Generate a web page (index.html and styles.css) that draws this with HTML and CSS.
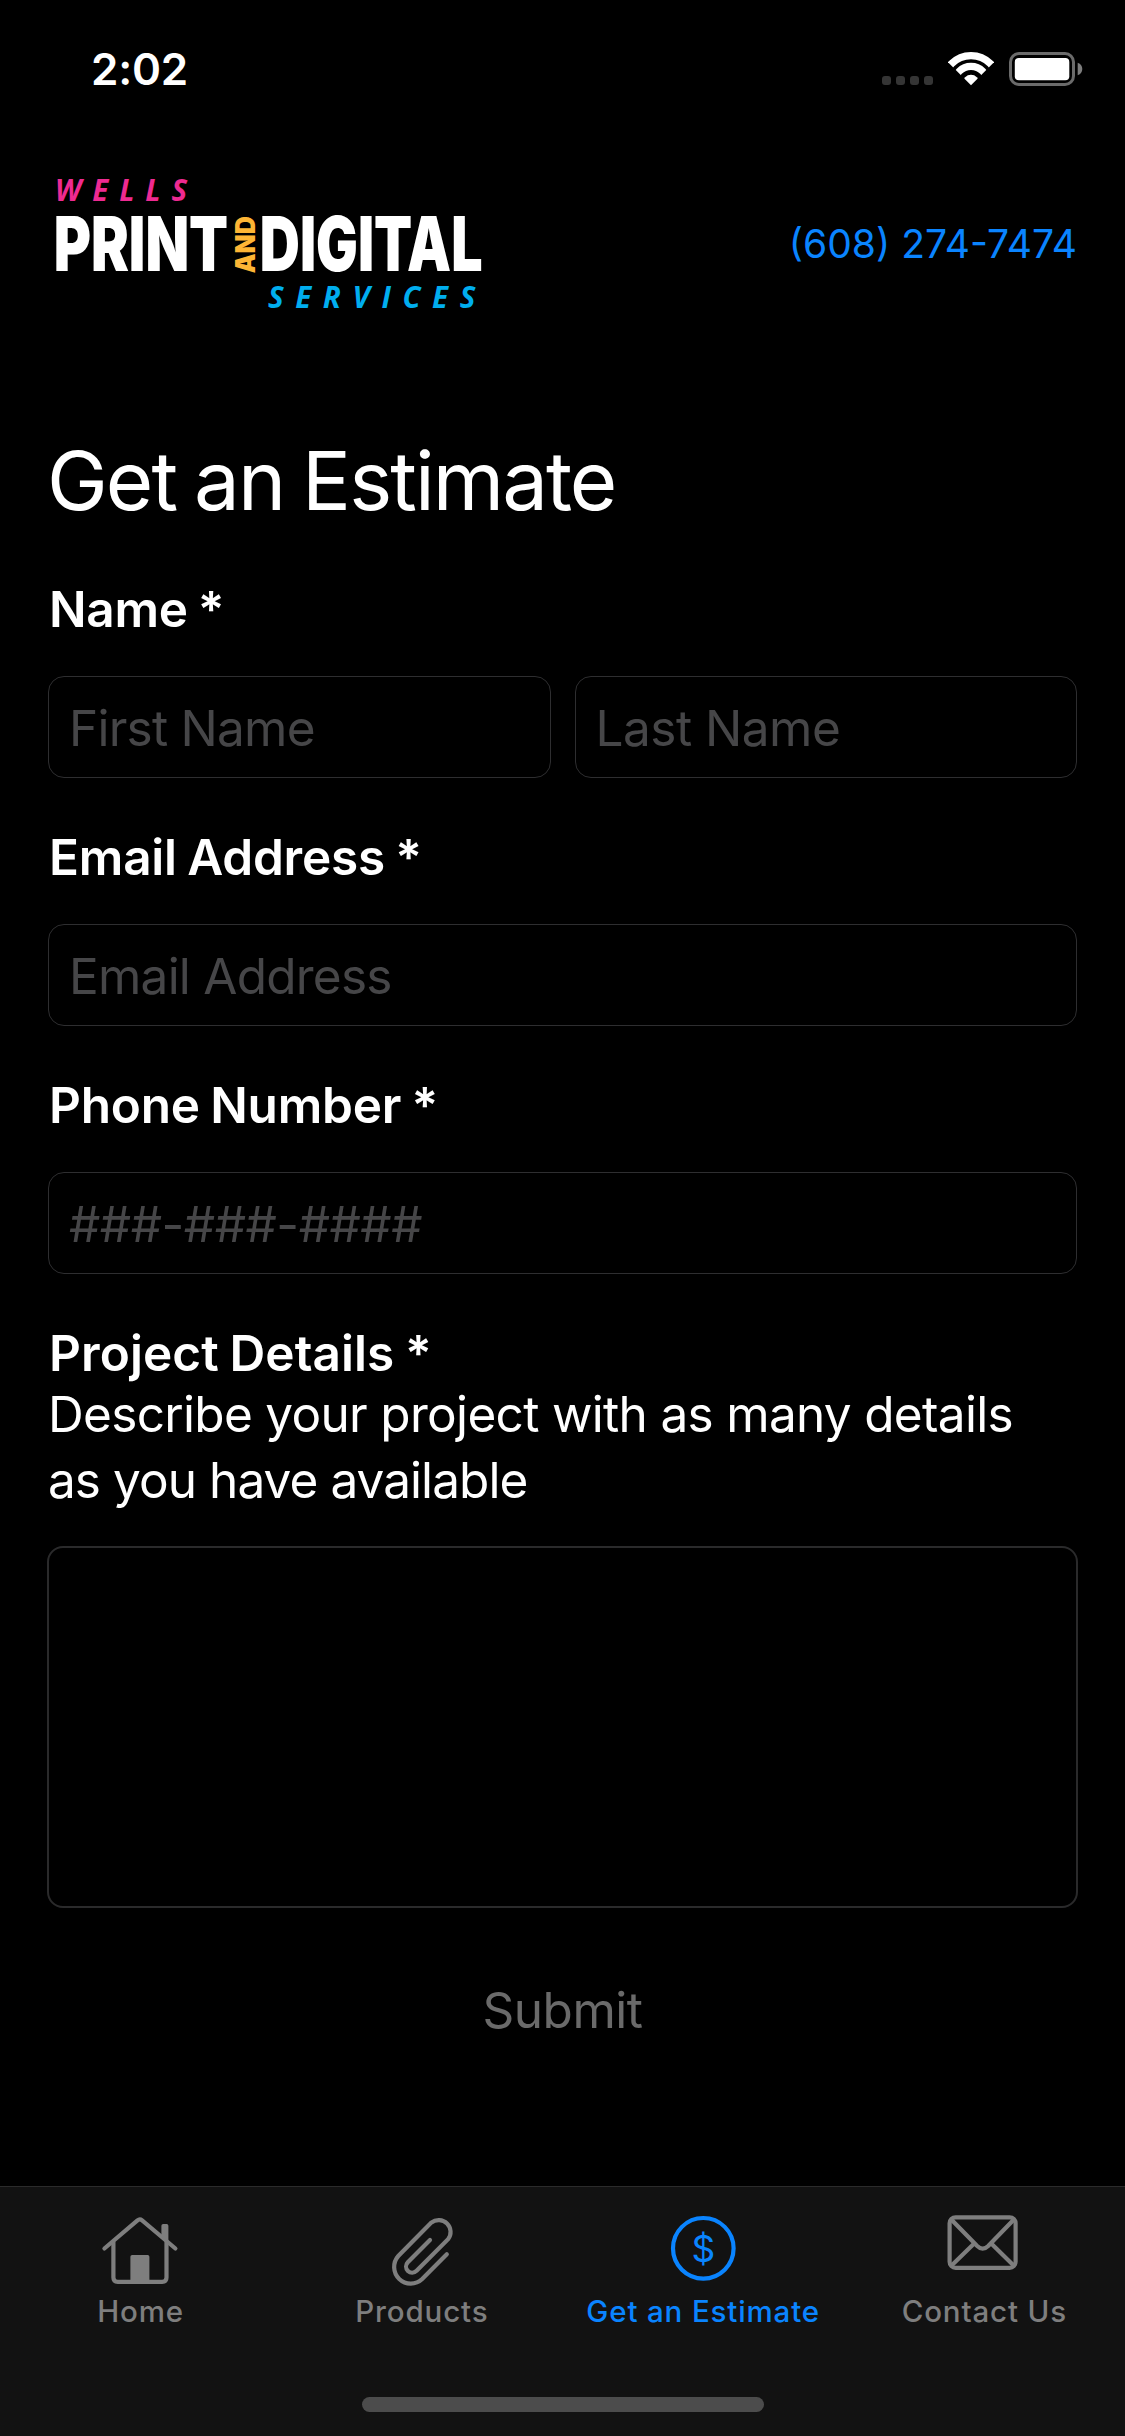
FILE: index.html
```html
<!DOCTYPE html>
<html lang="en">
<head>
<meta charset="utf-8">
<title>Get an Estimate</title>
<link rel="stylesheet" href="styles.css">
</head>
<body>
<div class="screen">
  <div class="status-bar">
    <span class="time">2:02</span>
    <div class="indicators">
      <div class="signal"><i></i><i></i><i></i><i></i></div>
      <svg class="wifi" width="46" height="34" viewBox="0 0 46 34">
        <clipPath id="wedge"><path d="M23 33.3L-11 -0.7H57Z"/></clipPath>
        <g clip-path="url(#wedge)" fill="none" stroke="#fff">
          <circle cx="23" cy="31" r="27.4" stroke-width="7.2"/>
          <circle cx="23" cy="31" r="16.6" stroke-width="7.2"/>
          <circle cx="23" cy="31" r="8.3" fill="#fff" stroke="none"/>
        </g>
      </svg>
      <svg class="battery" width="74" height="34" viewBox="0 0 74 34">
        <rect x="1.5" y="1.5" width="63" height="31" rx="8.5" fill="none" stroke="#6b6b6b" stroke-width="3"/>
        <rect x="5.8" y="6" width="54.5" height="22.3" rx="4" fill="#fff"/>
        <path d="M68.7 10.7C71.8 11.9 73.3 14.2 73.3 17S71.8 22.1 68.7 23.3Z" fill="#7d7d7d"/>
      </svg>
    </div>
  </div>

  <header class="header">
    <svg class="logo" width="426" height="136" viewBox="0 0 426 136">
      <text class="logo-wells" x="-1" y="25">WELLS</text>
      <text class="logo-main" transform="translate(-2.3 95) scale(.755 1)">PRINT</text>
      <text class="logo-and" transform="translate(199 97.3) rotate(-90) scale(.94 1)">AND</text>
      <text class="logo-main" transform="translate(203.8 95) scale(.738 1)">DIGITAL</text>
      <text class="logo-services" x="212" y="132.3">SERVICES</text>
    </svg>
    <a class="phone">(608) 274-7474</a>
  </header>

  <form class="form">
    <h1 class="title">Get an Estimate</h1>
    <div class="field">
      <label class="label label-name">Name *</label>
      <div class="inputs">
        <input class="input" type="text" placeholder="First Name">
        <input class="input input-last" type="text" placeholder="Last Name">
      </div>
    </div>
    <div class="field">
      <label class="label">Email Address *</label>
      <div class="inputs"><input class="input" type="text" placeholder="Email Address"></div>
    </div>
    <div class="field">
      <label class="label">Phone Number *</label>
      <div class="inputs"><input class="input input-phone" type="text" placeholder="###-###-####"></div>
    </div>
    <div class="field">
      <label class="label label-project">Project Details *</label>
      <p class="hint">Describe your project with as many details<br><span class="hint-end">as you have available</span></p>
      <textarea class="details"></textarea>
    </div>
    <button class="submit" type="button">Submit</button>
  </form>

  <nav class="tab-bar">
    <div class="tabs">
      <a class="tab">
        <svg class="tab-icon" viewBox="0 0 120 100">
          <path d="M23.4 55.5L56.5 27.3Q58.8 25.4 61.1 27.3L94.4 55.5" stroke-linecap="round"/>
          <path d="M32.4 48.5V84.5Q32.4 88.8 36.7 88.8H81.2Q85.5 88.8 85.5 84.5V48.5"/>
          <path class="solid" d="M49.4 90V63.8Q49.4 62 51.2 62H66.6Q68.4 62 68.4 63.8V90ZM80.4 43V32.8Q80.4 31 82.2 31H85.6Q87.4 31 87.4 32.8V49Z"/>
        </svg>
        <span>Home</span>
      </a>
      <a class="tab">
        <svg class="tab-icon" viewBox="0 0 120 100">
          <path d="M84.8 61.3L60.2 86A16.6 16.6 0 0 1 36.3 63L69.3 29.6A11.9 11.9 0 0 1 86.1 46.2L54.6 77.8A6.1 6.1 0 0 1 45.8 69.2L68 47" stroke-linecap="round"/>
        </svg>
        <span>Products</span>
      </a>
      <a class="tab active">
        <svg class="tab-icon" viewBox="0 0 120 100">
          <circle cx="60.3" cy="55.3" r="30.3"/>
          <text class="dollar" x="60.4" y="69.2">$</text>
        </svg>
        <span>Get an Estimate</span>
      </a>
      <a class="tab">
        <svg class="tab-icon" viewBox="0 0 120 100">
          <rect x="25.6" y="24.3" width="66" height="50.5" rx="6"/>
          <path d="M26.8 26L53.2 53Q58.7 58.3 64.2 53L90.4 26M26.8 73.2L50.4 50.3M90.4 73.2L67 50.3"/>
        </svg>
        <span>Contact Us</span>
      </a>
    </div>
    <div class="home-indicator"></div>
  </nav>
</div>
</body>
</html>
```

FILE: styles.css
```css
* { box-sizing: border-box; }

body {
  margin: 0;
  background: #000;
  color: #fff;
  font-family: "Inter", "Liberation Sans", sans-serif;
}

.screen {
  width: 1125px;
  height: 2436px;
  display: flex;
  flex-direction: column;
  overflow: hidden;
}

.status-bar {
  height: 132px;
  padding: 6px 42px 0 91px;
  display: flex;
  align-items: center;
  justify-content: space-between;
}

.time { font-size: 44px; font-weight: 600; letter-spacing: -0.2px; }

.indicators { display: flex; align-items: center; }
.signal { display: flex; gap: 5px; margin: 23px 15px 0 0; }
.signal i { width: 9px; height: 9px; border-radius: 3px; background: #353535; }
.wifi { margin-right: 15px; }

.header {
  height: 224px;
  padding: 0 48px 0 56px;
  display: flex;
  align-items: center;
  justify-content: space-between;
}

.logo { overflow: visible; }
.logo text { fill: #fff; }
.logo .logo-main { font-size: 75.2px; font-weight: 900; }
.logo .logo-and { fill: #fdb535; font-size: 26.5px; font-weight: 900; }
.logo .logo-wells,
.logo .logo-services {
  font-family: "Open Sans", sans-serif;
  font-size: 29.5px;
  font-style: italic;
  font-weight: 750;
}
.logo .logo-wells { fill: #ee2a91; letter-spacing: 10.9px; }
.logo .logo-services { fill: #00aeef; letter-spacing: 11.6px; }

.phone { color: #0a84ff; font-size: 39px; margin-top: -1px; }

.form {
  flex: 1;
  padding: 75px 48px 0;
  display: flex;
  flex-direction: column;
}

.title {
  margin: 0 0 45px -1px;
  font-size: 81.5px;
  font-weight: 400;
  line-height: 100px;
  letter-spacing: -1.95px;
  word-spacing: -3px;
}

.field { display: flex; flex-direction: column; margin-bottom: 46px; }

.label {
  padding-left: 1px;
  font-size: 49.5px;
  font-weight: 600;
  line-height: 66px;
  letter-spacing: -0.2px;
  word-spacing: -2px;
}
.label-name { letter-spacing: -0.3px; }
.label-project { letter-spacing: 0.1px; }

.inputs { display: flex; gap: 24px; margin-top: 34px; }

.input {
  flex: 1;
  min-width: 0;
  height: 102px;
  padding: 1px 20px 0;
  border: 1px solid #2e2e30;
  border-radius: 16px;
  background: #000;
  color: #fff;
  font: 400 49.5px "Inter", sans-serif;
  letter-spacing: -0.76px;
}
.input::placeholder { color: #464648; opacity: 1; }
.input-last { letter-spacing: -0.5px; }
.input-phone { letter-spacing: -0.5px; }

.hint {
  margin: -5px 0 0 0;
  font-size: 49.5px;
  line-height: 66px;
  letter-spacing: -0.68px;
  white-space: nowrap;
}
.hint-end { letter-spacing: -0.93px; }

.details {
  height: 362px;
  margin: 33px -1px 0;
  border: 2px solid #2a2a2b;
  border-radius: 16px;
  background: #000;
  resize: none;
}

.submit {
  align-self: center;
  margin-top: 23px;
  padding: 0;
  border: 0;
  background: none;
  color: #6a6a6a;
  font: 400 49.5px/66px "Inter", sans-serif;
  letter-spacing: -0.5px;
}

.tab-bar {
  height: 250px;
  border-top: 1px solid #2b2b2b;
  background: #121212;
  display: flex;
  flex-direction: column;
  align-items: center;
}

.tabs { width: 100%; padding-top: 6px; display: grid; grid-template-columns: repeat(4, 1fr); }

.tab {
  display: flex;
  flex-direction: column;
  align-items: center;
  color: #7e7e7e;
  font-size: 29.5px;
  font-weight: 500;
  line-height: 36px;
  letter-spacing: 0.85px;
}
.tab.active { color: #0a84ff; }

.tab-icon {
  width: 120px;
  height: 100px;
  fill: none;
  stroke: currentColor;
  stroke-width: 4.2px;
}
.tab-icon .solid { fill: currentColor; stroke: none; }
.tab-icon .dollar {
  fill: currentColor;
  stroke: none;
  font-size: 37px;
  font-weight: 400;
  letter-spacing: 0;
  text-anchor: middle;
}

.home-indicator {
  width: 402px;
  height: 15px;
  margin-top: 68px;
  border-radius: 8px;
  background: #4c4c4c;
}
```
